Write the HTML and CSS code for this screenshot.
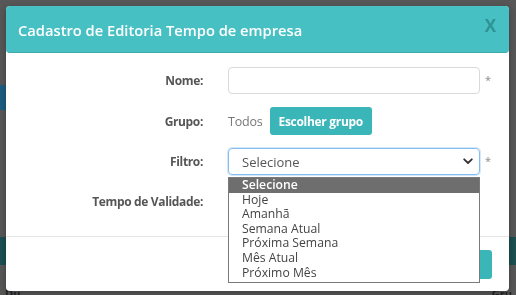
FILE: index.html
```html
<!DOCTYPE html>
<html lang="pt">
<head>
<meta charset="utf-8">
<title>Cadastro de Editoria</title>
<link rel="stylesheet" href="styles.css">
</head>
<body>
<div class="page">
  <div class="page-gap-a"></div>
  <div class="page-blue"></div>
  <div class="page-gap-b"></div>
  <div class="page-teal"></div>
  <div class="page-gap-c"></div>
  <div class="page-foot"><span>Du</span><span>Gru</span></div>
</div>

<div class="modal">
  <div class="modal-header">
    <h1 class="modal-title">Cadastro de Editoria Tempo de empresa</h1>
    <span class="modal-close">X</span>
  </div>
  <div class="modal-body">
    <div class="form-row">
      <label class="form-label">Nome:</label>
      <div class="form-field"><input class="form-input" type="text"></div>
      <span class="req">*</span>
    </div>
    <div class="form-row">
      <label class="form-label">Grupo:</label>
      <div class="form-field inline">
        <span class="muted">Todos</span>
        <button class="btn">Escolher grupo</button>
      </div>
    </div>
    <div class="form-row">
      <label class="form-label">Filtro:</label>
      <div class="form-field select-wrap">
        <div class="form-select focused">
          <span>Selecione</span>
          <svg class="chev" width="10" height="7" viewBox="0 0 10 7"><path d="M1.2 1.3 L5 5 L8.8 1.3" fill="none" stroke="#333" stroke-width="1.8" stroke-linecap="round" stroke-linejoin="round"/></svg>
        </div>
        <ul class="dropdown">
          <li class="active">Selecione</li>
          <li>Hoje</li>
          <li>Amanhã</li>
          <li>Semana Atual</li>
          <li>Próxima Semana</li>
          <li>Mês Atual</li>
          <li>Próximo Mês</li>
        </ul>
      </div>
      <span class="req">*</span>
    </div>
    <div class="form-row">
      <label class="form-label">Tempo de Validade:</label>
      <div class="form-field"><input class="form-input" type="text"></div>
    </div>
  </div>
  <div class="modal-footer">
    <button class="btn btn-lg">Salvar</button>
  </div>
</div>
</body>
</html>
```

FILE: styles.css
```css
* { box-sizing: border-box; }
html, body { margin: 0; padding: 0; }
body {
  width: 516px;
  height: 295px;
  overflow: hidden;
  background: #575757;
  font-family: "Open Sans", "Noto Sans", sans-serif;
}

.page { display: flex; flex-direction: column; }
.page-gap-a { height: 85px; }
.page-blue { height: 25px; width: 20px; background: #1d5d80; }
.page-gap-b { height: 127px; }
.page-teal { height: 28px; background: #1c4f50; }
.page-gap-c { height: 25px; }
.page-foot {
  display: flex;
  justify-content: space-between;
  padding: 0 4px 0 5px;
  font-size: 11px;
  font-weight: 700;
  color: #222;
  line-height: 8px;
  height: 8px;
}

.modal {
  position: fixed;
  top: 6px;
  left: 6px;
  width: 503px;
  height: 285px;
  background: #fff;
  border-radius: 4px;
  display: flex;
  flex-direction: column;
  box-shadow: 0 2px 6px rgba(0,0,0,0.3);
}

.modal-header {
  height: 47px;
  background: #47c0c3;
  border-radius: 4px;
  display: flex;
  align-items: center;
  justify-content: space-between;
  padding: 2px 13px 0 12px;
  border-bottom: 1px solid #3fa9ac;
}
.modal-title {
  margin: 0;
  color: #fff;
  font-size: 14.7px;
  font-weight: 600;
}
.modal-close {
  color: #2f9295;
  font-size: 17px;
  font-weight: 700;
  margin-top: -10px;
}

.modal-body {
  flex: 1;
  padding: 14px 0 0 0;
  display: flex;
  flex-direction: column;
  gap: 13px;
  border-bottom: 1px solid #e6e6e6;
}

.form-row {
  display: grid;
  grid-template-columns: 197px 252px auto;
  column-gap: 25px;
  align-items: center;
  height: 27px;
}
.form-row:nth-child(2) { height: 28px; }
.form-label {
  text-align: right;
  font-size: 12px;
  font-weight: 700;
  letter-spacing: -0.35px;
  color: #555;
}
.form-field { position: relative; height: 100%; }
.form-field.inline { display: flex; align-items: center; gap: 7px; }
.muted { color: #777; font-size: 12.5px; letter-spacing: -0.2px; }
.req { color: #888; font-size: 11px; margin-left: -20px; margin-top: -2px; }

.form-input {
  width: 100%;
  height: 100%;
  border: 1px solid #d9d9d9;
  border-radius: 4px;
  outline: none;
  margin: 0;
}
.form-select {
  height: 100%;
  border: 1px solid #c8c8c8;
  border-radius: 4px;
  display: flex;
  align-items: center;
  justify-content: space-between;
  padding: 0 6px 0 13px;
  font-size: 13px;
  color: #555;
}
.form-select.focused {
  border-color: #86bdf0;
  box-shadow: 0 0 0 1px rgba(134,189,240,0.35);
}

.btn {
  background: #3ab5b8;
  color: #fff;
  border: none;
  border-radius: 3px;
  font-family: inherit;
  font-weight: 700;
  font-size: 12px;
  letter-spacing: -0.3px;
  height: 28px;
  padding: 0 9px;
}
.btn-lg { height: 29px; width: 100px; }

.dropdown {
  position: absolute;
  top: 29px;
  left: 0;
  width: 252px;
  margin: 0;
  padding: 0 0 2px 0;
  list-style: none;
  background: #fff;
  border: 1px solid #7a7a7a;
  z-index: 5;
}
.dropdown li {
  font-size: 12.2px;
  line-height: 14.6px;
  color: #444;
  padding-left: 13px;
}
.dropdown li.active { background: #6e6e6e; color: #fff; font-weight: 600; }

.modal-footer {
  height: 54px;
  display: flex;
  align-items: center;
  justify-content: flex-end;
  padding: 0 17px;
}
```
